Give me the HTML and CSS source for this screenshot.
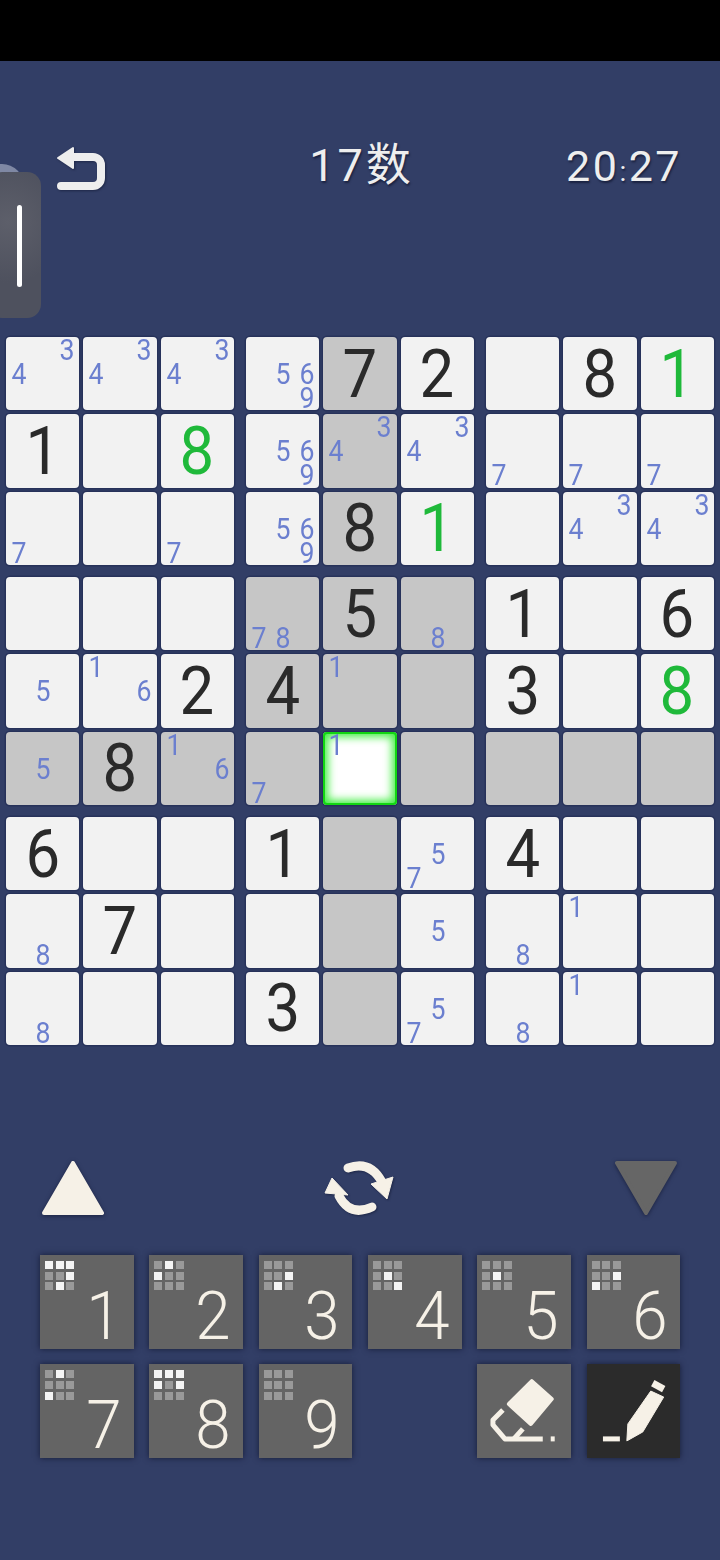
FILE: index.html
```html
<!DOCTYPE html>
<html>
<head>
  <title>Sudoku</title>
  <link rel="stylesheet" href="styles.css">
</head>
<body>
<div class="statusbar"></div>

<div class="side-handle"><div class="handle-bar"></div></div>

<div class="topbar">
  <svg class="undo-icon" width="50" height="46" viewBox="0 0 50 46">
    <path class="undo-head" d="M2 12 L17 2 V22 Z"/>
    <path class="undo-line" d="M14 11 H37 a8 8 0 0 1 8 8 V32 a8 8 0 0 1 -8 8 H5"/>
  </svg>
  <div class="title">17数</div>
  <div class="timer">20<span class="colon">:</span>27</div>
</div>

<div class="board">
  <div class="box">
    <div class="cell notes"><span class="n3">3</span><span class="n4">4</span></div>
    <div class="cell notes"><span class="n3">3</span><span class="n4">4</span></div>
    <div class="cell notes"><span class="n3">3</span><span class="n4">4</span></div>
    <div class="cell given"><span>1</span></div>
    <div class="cell"></div>
    <div class="cell given green"><span>8</span></div>
    <div class="cell notes"><span class="n7">7</span></div>
    <div class="cell"></div>
    <div class="cell notes"><span class="n7">7</span></div>
  </div>
  <div class="box">
    <div class="cell notes"><span class="n5">5</span><span class="n6">6</span><span class="n9">9</span></div>
    <div class="cell given hl"><span>7</span></div>
    <div class="cell given"><span>2</span></div>
    <div class="cell notes"><span class="n5">5</span><span class="n6">6</span><span class="n9">9</span></div>
    <div class="cell notes hl"><span class="n3">3</span><span class="n4">4</span></div>
    <div class="cell notes"><span class="n3">3</span><span class="n4">4</span></div>
    <div class="cell notes"><span class="n5">5</span><span class="n6">6</span><span class="n9">9</span></div>
    <div class="cell given hl"><span>8</span></div>
    <div class="cell given green"><span>1</span></div>
  </div>
  <div class="box">
    <div class="cell"></div>
    <div class="cell given"><span>8</span></div>
    <div class="cell given green"><span>1</span></div>
    <div class="cell notes"><span class="n7">7</span></div>
    <div class="cell notes"><span class="n7">7</span></div>
    <div class="cell notes"><span class="n7">7</span></div>
    <div class="cell"></div>
    <div class="cell notes"><span class="n3">3</span><span class="n4">4</span></div>
    <div class="cell notes"><span class="n3">3</span><span class="n4">4</span></div>
  </div>

  <div class="box">
    <div class="cell"></div>
    <div class="cell"></div>
    <div class="cell"></div>
    <div class="cell notes"><span class="n5">5</span></div>
    <div class="cell notes"><span class="n1">1</span><span class="n6">6</span></div>
    <div class="cell given"><span>2</span></div>
    <div class="cell notes hl"><span class="n5">5</span></div>
    <div class="cell given hl"><span>8</span></div>
    <div class="cell notes hl"><span class="n1">1</span><span class="n6">6</span></div>
  </div>
  <div class="box">
    <div class="cell notes hl"><span class="n7">7</span><span class="n8">8</span></div>
    <div class="cell given hl"><span>5</span></div>
    <div class="cell notes hl"><span class="n8">8</span></div>
    <div class="cell given hl"><span>4</span></div>
    <div class="cell notes hl"><span class="n1">1</span></div>
    <div class="cell hl"></div>
    <div class="cell notes hl"><span class="n7">7</span></div>
    <div class="cell notes selected"><span class="n1">1</span></div>
    <div class="cell hl"></div>
  </div>
  <div class="box">
    <div class="cell given"><span>1</span></div>
    <div class="cell"></div>
    <div class="cell given"><span>6</span></div>
    <div class="cell given"><span>3</span></div>
    <div class="cell"></div>
    <div class="cell given green"><span>8</span></div>
    <div class="cell hl"></div>
    <div class="cell hl"></div>
    <div class="cell hl"></div>
  </div>

  <div class="box">
    <div class="cell given"><span>6</span></div>
    <div class="cell"></div>
    <div class="cell"></div>
    <div class="cell notes"><span class="n8">8</span></div>
    <div class="cell given"><span>7</span></div>
    <div class="cell"></div>
    <div class="cell notes"><span class="n8">8</span></div>
    <div class="cell"></div>
    <div class="cell"></div>
  </div>
  <div class="box">
    <div class="cell given"><span>1</span></div>
    <div class="cell hl"></div>
    <div class="cell notes"><span class="n5">5</span><span class="n7">7</span></div>
    <div class="cell"></div>
    <div class="cell hl"></div>
    <div class="cell notes"><span class="n5">5</span></div>
    <div class="cell given"><span>3</span></div>
    <div class="cell hl"></div>
    <div class="cell notes"><span class="n5">5</span><span class="n7">7</span></div>
  </div>
  <div class="box">
    <div class="cell given"><span>4</span></div>
    <div class="cell"></div>
    <div class="cell"></div>
    <div class="cell notes"><span class="n8">8</span></div>
    <div class="cell notes"><span class="n1">1</span></div>
    <div class="cell"></div>
    <div class="cell notes"><span class="n8">8</span></div>
    <div class="cell notes"><span class="n1">1</span></div>
    <div class="cell"></div>
  </div>
</div>

<div class="controls">
  <svg class="arrow" width="66" height="58" viewBox="0 0 66 58">
    <path class="tri-light" d="M33 4 L62 54 H4 Z"/>
  </svg>
  <svg class="refresh" width="80" height="70" viewBox="0 -2 80 70">
    <path class="refresh-line" d="M28 13 Q50 5 62 27"/>
    <path class="refresh-head" d="M51 29 L73 22 L67 44 Z"/>
    <path class="refresh-line" d="M52 52 Q30 62 19 41"/>
    <path class="refresh-head" d="M12 23 L5 38 L28 40 Z"/>
  </svg>
  <svg class="arrow" width="66" height="58" viewBox="0 0 66 58">
    <path class="tri-dark" d="M4 4 H62 L33 54 Z"/>
  </svg>
</div>

<div class="keys">
  <div class="key">
    <div class="mini"><i class="on"></i><i class="on"></i><i class="on"></i><i></i><i></i><i class="on"></i><i></i><i class="on"></i><i></i></div>
    <span class="key-num">1</span>
  </div>
  <div class="key">
    <div class="mini"><i></i><i class="on"></i><i></i><i class="on"></i><i></i><i></i><i></i><i></i><i></i></div>
    <span class="key-num">2</span>
  </div>
  <div class="key">
    <div class="mini"><i></i><i></i><i></i><i></i><i></i><i class="on"></i><i></i><i class="on"></i><i></i></div>
    <span class="key-num">3</span>
  </div>
  <div class="key">
    <div class="mini"><i></i><i></i><i></i><i></i><i class="on"></i><i></i><i></i><i></i><i class="on"></i></div>
    <span class="key-num">4</span>
  </div>
  <div class="key">
    <div class="mini"><i></i><i></i><i></i><i></i><i class="on"></i><i></i><i></i><i></i><i></i></div>
    <span class="key-num">5</span>
  </div>
  <div class="key">
    <div class="mini"><i></i><i></i><i></i><i></i><i></i><i class="on"></i><i class="on"></i><i></i><i></i></div>
    <span class="key-num">6</span>
  </div>
  <div class="key">
    <div class="mini"><i></i><i class="on"></i><i></i><i></i><i></i><i></i><i class="on"></i><i></i><i></i></div>
    <span class="key-num">7</span>
  </div>
  <div class="key">
    <div class="mini"><i class="on"></i><i class="on"></i><i class="on"></i><i class="on"></i><i></i><i class="on"></i><i></i><i></i><i></i></div>
    <span class="key-num">8</span>
  </div>
  <div class="key">
    <div class="mini"><i></i><i></i><i></i><i></i><i></i><i></i><i></i><i></i><i></i></div>
    <span class="key-num">9</span>
  </div>
  <div class="key-gap"></div>
  <div class="key">
    <svg class="key-icon" width="94" height="94" viewBox="0 0 94 94">
      <path class="eraser-body" d="M55 17 L75 35 L54 60 L32 40 Z"/>
      <path class="icon-line" d="M26 46 L16 56 V61 L28 75 H66"/>
      <path class="icon-line" d="M46 65 L37 75"/>
      <path class="icon-line" d="M74 75 H78"/>
    </svg>
  </div>
  <div class="key dark">
    <svg class="key-icon" width="94" height="94" viewBox="0 0 94 94">
      <path class="pencil-body" d="M64 27 L77 33 L56 68 L40 77 L41 60 Z"/>
      <path class="pencil-cap" d="M66 19 L77 25"/>
      <path class="icon-line" d="M16 75 H33"/>
    </svg>
  </div>
</div>
</body>
</html>
```

FILE: styles.css
```css
body {
  margin: 0;
  width: 720px;
  height: 1560px;
  overflow: hidden;
  position: relative;
  background-color: #323e66;
  font-family: Roboto, sans-serif;
}

.statusbar {
  height: 61px;
  background-color: #000;
}

/* floating side panel, sits over the page */
.side-handle {
  position: absolute;
  left: -12px;
  top: 172px;
  width: 53px;
  height: 146px;
  border-radius: 14px;
  background: radial-gradient(circle at 20px 50px, #5d5f6a, #4e515e 60%);
}

.side-handle::before {
  content: "";
  position: absolute;
  left: -8px;
  top: -8px;
  width: 44px;
  height: 44px;
  border-radius: 50%;
  background-color: #7f88a4;
  z-index: -1;
}

.handle-bar {
  position: absolute;
  left: 29px;
  top: 33px;
  width: 5px;
  height: 82px;
  border-radius: 3px;
  background-color: #fff;
}

.topbar {
  height: 276px;
  box-sizing: border-box;
  padding: 85px 38px 0 56px;
  display: flex;
  align-items: flex-start;
  justify-content: space-between;
  color: #eeeeee;
  text-shadow: 1px 2px 2px rgba(10, 15, 40, 0.6);
}

.undo-icon {
  fill: none;
  filter: drop-shadow(1px 1px 1px rgba(10, 15, 40, 0.5));
}

.undo-head {
  fill: #eeeeee;
  stroke: #eeeeee;
  stroke-width: 2;
  stroke-linejoin: round;
}

.undo-line {
  stroke: #eeeeee;
  stroke-width: 8;
  stroke-linecap: round;
}

.title {
  font-family: Roboto, "Noto Sans CJK SC", sans-serif;
  font-size: 45px;
  line-height: 40px;
  letter-spacing: 3px;
  margin-left: 51px;
}

.timer {
  font-size: 43px;
  line-height: 40px;
  letter-spacing: 2.5px;
}

.colon {
  font-size: 28px;
}

.board {
  display: grid;
  grid-template-columns: repeat(3, 228px);
  gap: 12px;
  padding-left: 6px;
}

.box {
  display: grid;
  grid-template-columns: repeat(3, 73.33px);
  grid-auto-rows: 73.33px;
  gap: 4px;
}

.cell {
  background-color: #f2f2f2;
  border-radius: 4px;
  box-shadow: 0 0 0 1.5px #27325a;
  color: #2a2a2a;
}

.cell.hl {
  background-color: #c6c6c6;
}

.given {
  display: flex;
  align-items: center;
  justify-content: center;
  font-size: 67px;
  line-height: 74px;
}

.given span {
  transform: scaleX(0.92);
}

.green {
  color: #1fb93a;
}

.notes {
  display: grid;
  grid-template-columns: repeat(3, 24px);
  grid-template-rows: repeat(3, 24px);
  padding: 1px;
  box-sizing: border-box;
  color: #6b7fcf;
  font-size: 29px;
  line-height: 24px;
  text-align: center;
}

.notes span {
  transform: scaleX(0.92);
}

.n1 { grid-area: 1 / 1; }
.n3 { grid-area: 1 / 3; }
.n4 { grid-area: 2 / 1; }
.n5 { grid-area: 2 / 2; }
.n6 { grid-area: 2 / 3; }
.n7 { grid-area: 3 / 1; }
.n8 { grid-area: 3 / 2; }
.n9 { grid-area: 3 / 3; }

.cell.selected {
  background-color: #fff;
  box-shadow: 0 0 0 1.5px #27325a, inset 0 0 0 2px #12d612, inset 0 0 9px 5px #45ee45;
}

.controls {
  margin-top: 113px;
  padding: 0 41px 0 40px;
  height: 60px;
  display: flex;
  align-items: center;
  justify-content: space-between;
}

.arrow {
  filter: drop-shadow(0 1px 2px rgba(10, 15, 40, 0.6));
}

.tri-light {
  fill: #f6f1e7;
  stroke: #f6f1e7;
  stroke-width: 4;
  stroke-linejoin: round;
}

.tri-dark {
  fill: #666666;
  stroke: #666666;
  stroke-width: 4;
  stroke-linejoin: round;
}

.refresh {
  filter: drop-shadow(1px 1px 1px rgba(10, 15, 40, 0.5));
}

.refresh-line {
  fill: none;
  stroke: #f6f1e7;
  stroke-width: 9;
  stroke-linecap: round;
}

.refresh-head {
  fill: #f6f1e7;
  stroke: #f6f1e7;
  stroke-width: 1;
  stroke-linejoin: round;
}

.keys {
  margin-top: 37px;
  padding-left: 40px;
  display: grid;
  grid-template-columns: repeat(6, 93.67px);
  grid-auto-rows: 93.67px;
  gap: 15.67px;
}

.key {
  position: relative;
  background-color: #646464;
  box-shadow: 0 0 6px rgba(15, 20, 45, 0.8);
  display: flex;
  align-items: flex-end;
  justify-content: flex-end;
}

.key.dark {
  background-color: #2b2b2b;
}

.mini {
  position: absolute;
  left: 5px;
  top: 6px;
  display: grid;
  grid-template-columns: repeat(3, 8px);
  grid-auto-rows: 8px;
  gap: 2.67px;
}

.mini i {
  background-color: #999999;
}

.mini i.on {
  background-color: #f4f4f4;
}

.key-num {
  width: 60px;
  text-align: center;
  color: #f6f1e7;
  font-size: 67px;
  font-weight: 300;
  line-height: 66px;
  transform: scaleX(0.95);
}

.key-icon {
  display: block;
}

.eraser-body {
  fill: #f6f1e7;
  stroke: #f6f1e7;
  stroke-width: 4;
  stroke-linejoin: round;
}

.icon-line {
  fill: none;
  stroke: #f6f1e7;
  stroke-width: 5;
  stroke-linejoin: round;
}

.pencil-body {
  fill: #f6f1e7;
  stroke: #f6f1e7;
  stroke-width: 1;
  stroke-linejoin: round;
}

.pencil-cap {
  fill: none;
  stroke: #f6f1e7;
  stroke-width: 7;
}
```
